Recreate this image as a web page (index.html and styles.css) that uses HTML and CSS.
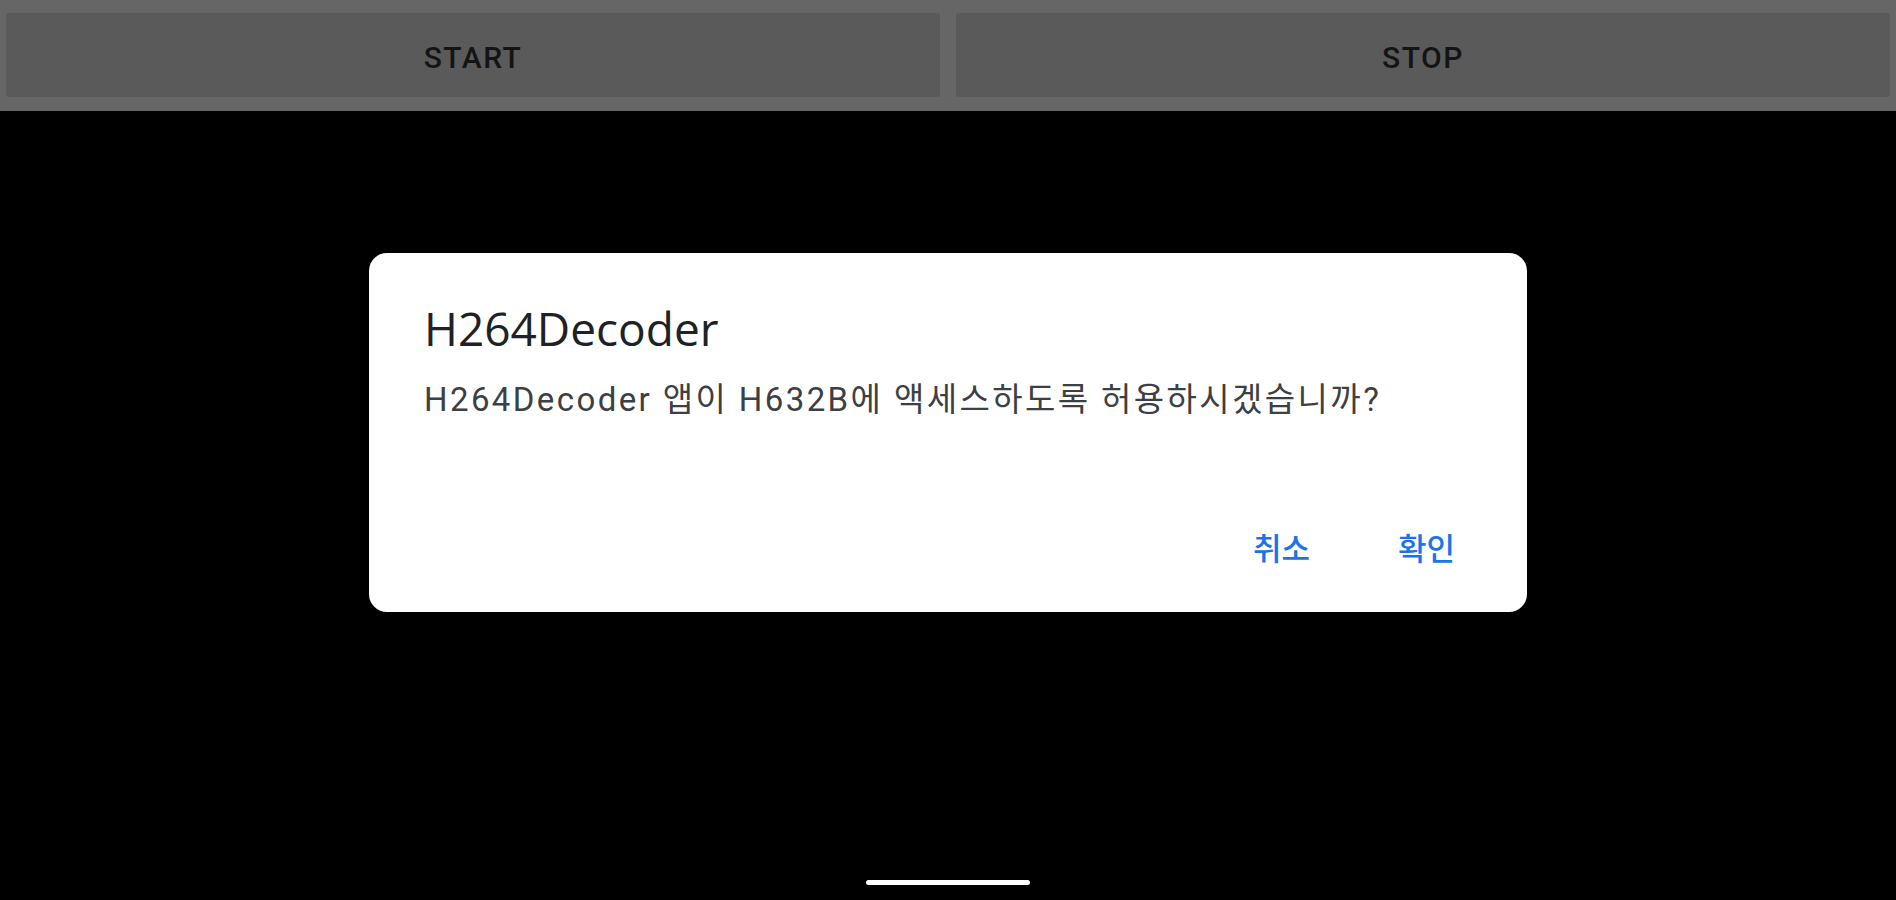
FILE: index.html
```html
<!DOCTYPE html>
<html lang="ko">
<head>
    <meta charset="UTF-8">
    <meta name="viewport" content="width=device-width, initial-scale=1.0">
    <title>H264Decoder</title>
    <link rel="stylesheet" href="styles.css">
</head>
<body>
    <div class="toolbar">
        <button class="btn">START</button>
        <button class="btn">STOP</button>
    </div>

    <div class="stage">
        <div class="dialog">
            <div class="dialog-title">H264Decoder</div>
            <div class="dialog-message">H264Decoder 앱이 H632B에 액세스하도록 허용하시겠습니까?</div>
            <div class="dialog-actions">
                <button class="action">취소</button>
                <button class="action">확인</button>
            </div>
        </div>
        <div class="home-bar"></div>
    </div>
</body>
</html>
```

FILE: styles.css
```css
* { margin: 0; padding: 0; box-sizing: border-box; }
html, body { height: 100%; }
body {
    font-family: Roboto, "Noto Sans CJK KR", sans-serif;
    background: #000;
    display: flex;
    flex-direction: column;
    overflow: hidden;
}
.toolbar {
    height: 111px;
    background: #666;
    display: flex;
    gap: 16px;
    padding: 13px 6px 14px 6px;
}
.btn {
    flex: 1;
    background: #5a5a5a;
    border: none;
    border-radius: 3px;
    padding-top: 5px;
    color: #141414;
    font-family: Roboto, sans-serif;
    font-weight: 500;
    font-size: 30px;
    letter-spacing: 1.5px;
}
.stage {
    flex: 1;
    display: flex;
    flex-direction: column;
    align-items: center;
    padding-top: 142px;
}
.dialog {
    width: 1158px;
    height: 359px;
    background: #fff;
    border-radius: 18px;
    padding: 49px 55px 0 55px;
    display: flex;
    flex-direction: column;
}
.dialog-title {
    font-family: "Open Sans", Roboto, sans-serif;
    font-size: 46px;
    color: #202124;
    line-height: 52px;
}
.dialog-message {
    margin-top: 24px;
    font-family: Roboto, "Noto Sans CJK KR", sans-serif;
    font-size: 33px;
    letter-spacing: 2.4px;
    color: #3c4043;
    line-height: 44px;
}
.dialog-actions {
    margin-top: auto;
    margin-bottom: 35px;
    display: flex;
    justify-content: flex-end;
    gap: 88px;
    padding: 8px 17px 8px 0;
}
.action {
    background: none;
    border: none;
    color: #1a73e8;
    font-family: "Noto Sans CJK KR", sans-serif;
    font-weight: 500;
    font-size: 31px;
}
.home-bar {
    margin-top: auto;
    margin-bottom: 15px;
    width: 164px;
    height: 5px;
    border-radius: 3px;
    background: #fff;
}
```
